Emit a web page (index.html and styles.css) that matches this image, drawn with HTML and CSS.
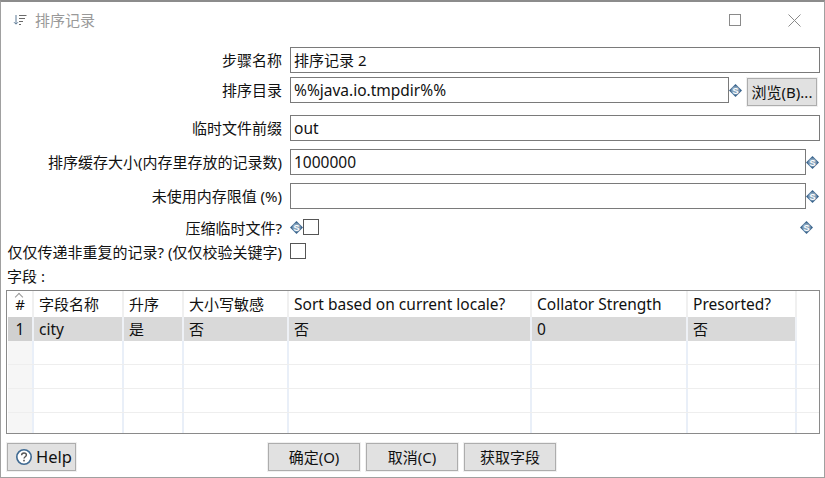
FILE: index.html
```html
<!DOCTYPE html>
<html lang="zh">
<head>
<meta charset="utf-8">
<title>排序记录</title>
<link rel="stylesheet" href="styles.css">
</head>
<body>
<svg class="defs" width="0" height="0"><defs>
<symbol id="var" viewBox="0 0 13 13"><path d="M6.5 0 13 6.5 6.5 13 0 6.5Z" fill="#3c668e"/><circle cx="6.5" cy="6.5" r="4.2" fill="#86a2bb"/><text x="6.5" y="9.7" text-anchor="middle" class="var-s">S</text></symbol>
</defs></svg>
<div class="window">
  <header class="titlebar">
    <svg class="title-icon" width="14" height="14" viewBox="0 0 14 14"><path d="M3 2V11M1 9.2 3 11.2 5 9.2" fill="none" stroke="#5d7a96"/><path d="M6 2.5H13.5M6 5.5H12M6 8.5H10M6 11.5H8" stroke="#6b6b6b"/></svg>
    <span class="title-text">排序记录</span>
    <svg class="win-btn maxb" width="12" height="12" viewBox="0 0 12 12"><rect x=".5" y=".5" width="11" height="11" fill="none" stroke="#8a8a8a"/></svg>
    <svg class="win-btn closeb" width="13" height="13" viewBox="0 0 13 13"><path d="M.5 .5 12.5 12.5M12.5 .5 .5 12.5" stroke="#8a8a8a"/></svg>
  </header>
  <main class="form">
    <div class="row r1"><label class="lbl">步骤名称</label><div class="input cjk">排序记录 2</div></div>
    <div class="row r2"><label class="lbl">排序目录</label><div class="input">%%java.io.tmpdir%%</div><svg class="var"><use href="#var"/></svg><button class="btn browse">浏览(B)...</button></div>
    <div class="row r3"><label class="lbl">临时文件前缀</label><div class="input">out</div></div>
    <div class="row r4"><label class="lbl">排序缓存大小(内存里存放的记录数)</label><div class="input">1000000</div><svg class="var"><use href="#var"/></svg></div>
    <div class="row r5"><label class="lbl">未使用内存限值 (%)</label><div class="input"></div><svg class="var"><use href="#var"/></svg></div>
    <div class="row r6"><label class="lbl">压缩临时文件?</label><svg class="var"><use href="#var"/></svg><span class="check"></span><span class="spring"></span><svg class="var"><use href="#var"/></svg></div>
    <div class="row r7"><label class="lbl">仅仅传递非重复的记录? (仅仅校验关键字)</label><span class="check"></span></div>
    <div class="fields-label">字段 :</div>
    <div class="table">
      <div class="tr head">
        <div class="td c0"><span class="sort"></span>#</div><div class="td c1">字段名称</div><div class="td c2">升序</div><div class="td c3">大小写敏感</div><div class="td c4 lat">Sort based on current locale?</div><div class="td c5 lat">Collator Strength</div><div class="td c6 lat">Presorted?</div>
      </div>
      <div class="tr sel">
        <div class="td c0 lat">1</div><div class="td c1 lat">city</div><div class="td c2">是</div><div class="td c3">否</div><div class="td c4">否</div><div class="td c5 lat">0</div><div class="td c6">否</div>
      </div>
      <div class="tr"><div class="td c0"></div><div class="td c1"></div><div class="td c2"></div><div class="td c3"></div><div class="td c4"></div><div class="td c5"></div><div class="td c6"></div></div>
      <div class="tr"><div class="td c0"></div><div class="td c1"></div><div class="td c2"></div><div class="td c3"></div><div class="td c4"></div><div class="td c5"></div><div class="td c6"></div></div>
      <div class="tr"><div class="td c0"></div><div class="td c1"></div><div class="td c2"></div><div class="td c3"></div><div class="td c4"></div><div class="td c5"></div><div class="td c6"></div></div>
      <div class="tr last"><div class="td c0"></div><div class="td c1"></div><div class="td c2"></div><div class="td c3"></div><div class="td c4"></div><div class="td c5"></div><div class="td c6"></div></div>
    </div>
    <footer class="footer">
      <button class="btn help"><svg width="18" height="18" viewBox="0 0 18 18"><circle cx="9" cy="9" r="7.2" fill="#fff" stroke="#3f6a92" stroke-width="1.6"/><path d="M6.6 7.2C6.6 5.8 7.7 5 9 5S11.4 5.8 11.4 7.1C11.4 8.7 9 8.9 9 10.6" fill="none" stroke="#555" stroke-width="1.4"/><rect x="8.2" y="11.8" width="1.6" height="1.6" fill="#555"/></svg>Help</button>
      <div class="actions">
        <button class="btn act">确定(O)</button>
        <button class="btn act">取消(C)</button>
        <button class="btn act">获取字段</button>
      </div>
    </footer>
  </main>
</div>
</body>
</html>
```
FILE: styles.css
```css
* { box-sizing: border-box; }
html, body { margin: 0; padding: 0; background: #fff; }
body { width: 825px; height: 478px; overflow: hidden; font-family: "Noto Sans", "Noto Sans CJK SC", sans-serif; font-size: 15px; color: #111; }
.defs { position: absolute; }
.var-s { font: bold 9px "Liberation Sans", sans-serif; fill: #fff; }
.window { width: 825px; height: 478px; border: 1px solid #a0a0a0; border-top: 2px solid #8c8c8c; background: #fff; }
.titlebar { display: flex; align-items: center; height: 36px; padding-left: 12px; }
.title-icon { margin-right: 8px; margin-top: -1px; }
.title-text { color: #999; font-size: 15px; position: relative; top: -1px; }
.win-btn { flex: none; }
.maxb { margin-left: auto; margin-right: 47px; }
.closeb { margin-right: 23px; }
.form { padding: 9px 4px 0 5px; }
.row { display: flex; align-items: center; }
.r1, .r2, .r3, .r4, .r5 { height: 26px; }
.r2 { margin-top: 4px; }
.r3 { margin-top: 12px; }
.r4 { margin-top: 8px; }
.r5 { margin-top: 8px; }
.r6 { height: 18px; margin-top: 9px; }
.r7 { height: 18px; margin-top: 6px; }
.lbl { width: 276px; flex: none; text-align: right; margin-right: 8px; white-space: nowrap; position: relative; top: -1px; }
.r6 .lbl, .r7 .lbl { top: 0; }
.input { flex: 1; height: 100%; border: 1px solid #7a7a7a; padding: 0 3px; line-height: 25px; font-size: 15.5px; white-space: nowrap; }
.input.cjk { font-size: 15px; }
.r4 .input, .r5 .input { flex: none; width: 516px; }
.r2 .input { flex: none; width: 439px; }
.var { width: 13px; height: 13px; flex: none; }
.r6 .lbl { width: 276px; }
.btn { font: inherit; color: #111; background: #e1e1e1; border: 1px solid #adadad; outline: 1px solid #f0f0f0; padding: 0 0 2px; cursor: default; }
.browse { width: 70px; height: 28px; margin: 4px 0 0 5px; }
.check { width: 16px; height: 16px; border: 1px solid #555; flex: none; background: #fff; }
.spring { flex: 1; }
.r6 .var:last-child { margin-right: 7px; }
.fields-label { height: 18px; margin-top: 7px; line-height: 18px; padding-left: 1px; }
.table { margin-top: 5px; width: 814px; height: 144px; border: 1px solid #8a8a8a; padding-left: 1px; overflow: hidden; }
.tr { display: flex; height: 24px; border-bottom: 1px solid #eeeeee; }
.tr.head { height: 26px; border-bottom: 0; }
.tr.sel { height: 24px; background: #d9d9d9; width: 789px; border-bottom: 0; }
.tr.last { border-bottom: 0; }
.td { flex: none; border-right: 2px solid #e9eff8; padding-left: 5px; white-space: nowrap; line-height: 24px; position: relative; }
.td.lat { font-size: 15.5px; }
.head .td { line-height: 27px; border-right-color: #f0f0f0; }
.sel .td { border-right-color: #eef1f6; }
.c0 { width: 26px; text-align: center; padding-left: 0; }
.tr .c0 { background: #f6f6f6; }
.head .c0 { background: #fff; }
.tr.sel .c0 { background: #d0d0d0; }
.c1 { width: 90px; }
.c2 { width: 60px; }
.c3 { width: 105px; }
.c4 { width: 243px; }
.c5 { width: 156px; }
.c6 { width: 109px; }
.sort { position: absolute; top: 3px; left: 8px; width: 6px; height: 6px; border-left: 1px solid #999; border-top: 1px solid #999; transform: rotate(45deg); }
.footer { display: flex; margin-top: 9px; }
.help { width: 69px; height: 28px; display: flex; align-items: center; padding: 0 0 1px 7px; gap: 3px; font-size: 16.5px; margin-left: 1px; }
.actions { display: flex; gap: 6px; margin-left: 192px; }
.act { width: 92px; height: 28px; }
```
